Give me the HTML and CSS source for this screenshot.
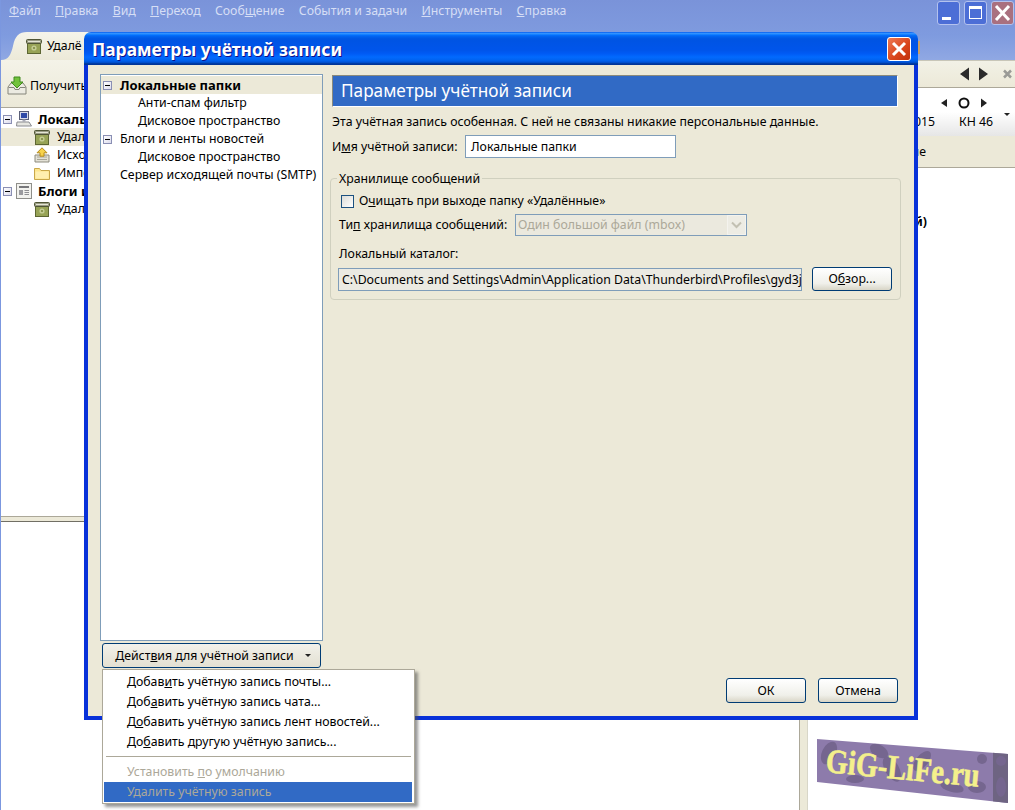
FILE: index.html
```html
<!DOCTYPE html>
<html lang="ru">
<head>
<meta charset="utf-8">
<title>Параметры учётной записи</title>
<link rel="stylesheet" href="styles.css">
</head>
<body>
<svg class="defs" width="0" height="0" aria-hidden="true">
  <symbol id="i-trash" viewBox="0 0 16 16">
    <rect x="1.500" y="5" width="13" height="10.500" fill="#97a356" stroke="#5d6632"/>
    <rect x="0.500" y="1.500" width="15" height="4" rx="1" fill="#9a9c84" stroke="#4f5535"/>
    <rect x="2" y="3" width="12" height="1" fill="#e4e5d5"/>
    <circle cx="8" cy="10" r="2.600" fill="#c4cc94"/>
    <circle cx="8" cy="10" r="1.100" fill="#7e8a42"/>
  </symbol>
  <symbol id="i-out" viewBox="0 0 16 16">
    <path d="M1 8h14v7H1z" fill="#e3e1d6" stroke="#8d8b7f"/>
    <path d="M3 10h10M3 12.500h10" stroke="#a8a697"/>
    <path d="M8 .8l5 5h-3v3.400H6V5.800H3z" fill="#f7d34b" stroke="#b48a1e"/>
  </symbol>
  <symbol id="i-folder" viewBox="0 0 16 16">
    <path d="M.5 3.500h5l1.500 2h8.500v9H.5z" fill="#fde58c" stroke="#c9a74a"/>
    <path d="M1.500 6.500h13v7h-13z" fill="#ffefb0"/>
  </symbol>
  <symbol id="i-pc" viewBox="0 0 16 16">
    <rect x="3.500" y=".5" width="9" height="8" fill="#d9dcea" stroke="#5b6078"/>
    <rect x="5" y="2" width="6" height="5" fill="#2f4aa8"/>
    <rect x="6.500" y="8.500" width="3" height="2" fill="#a9abb8"/>
    <path d="M1 11h12l2.500 4H.5z" fill="#e6e6e0" stroke="#8a8b90"/>
  </symbol>
  <symbol id="i-feed" viewBox="0 0 16 16">
    <rect x=".5" y=".5" width="15" height="15" fill="#f2f2ee" stroke="#8f8f8a"/>
    <rect x="3" y="3" width="10" height="2" fill="#77777a"/>
    <rect x="3" y="7" width="4" height="5" fill="#9a9a9e"/>
    <path d="M8.500 7.500h4.500M8.500 9.500h4.500M8.500 11.500h4.500" stroke="#8f8f92"/>
  </symbol>
  <symbol id="i-get" viewBox="0 0 20 20">
    <path d="M1 11l3-4h12l3 4v7H1z" fill="#ecebe2" stroke="#85857a"/>
    <path d="M1.500 11.500h5.500l1 2h4l1-2h5.500" fill="none" stroke="#85857a"/>
    <path d="M7 1h6v5h3l-6 6-6-6h3z" fill="#72c23c" stroke="#3f8a1e"/>
  </symbol>
</svg>

<div class="app">
  <header class="chrome">
    <div class="menu-row">
      <nav class="menu">
        <span><u>Ф</u>айл</span>
        <span><u>П</u>равка</span>
        <span><u>В</u>ид</span>
        <span><u>П</u>ереход</span>
        <span>Сооб<u>щ</u>ение</span>
        <span>События и задачи</span>
        <span><u>И</u>нструменты</span>
        <span><u>С</u>правка</span>
      </nav>
      <div class="win-btns">
        <div class="win-btn"><svg width="23" height="24" viewBox="0 0 23 24"><rect x="5" y="16" width="9" height="3" fill="#fff"/></svg></div>
        <div class="win-btn"><svg width="23" height="24" viewBox="0 0 23 24"><rect x="5.500" y="5.500" width="12" height="12" fill="none" stroke="#fff"/><rect x="5" y="5" width="13" height="3" fill="#fff"/></svg></div>
        <div class="win-btn win-close"><svg width="23" height="24" viewBox="0 0 23 24"><path d="M5 5l13 14M18 5L5 19" stroke="#fff" stroke-width="3"/></svg></div>
      </div>
    </div>
    <div class="tab-row">
      <div class="tab"><svg class="ico16"><use href="#i-trash"/></svg><span>Удалё</span></div>
      <div class="tab-end"></div>
    </div>
  </header>

  <div class="work">
    <div class="main-col">
      <div class="toolbar"><svg class="ico20"><use href="#i-get"/></svg><span>Получить</span></div>
      <div class="folders">
        <div class="f-row"><i class="exp"></i><svg class="ico16"><use href="#i-pc"/></svg><b>Локальные папки</b></div>
        <div class="f-row sub cur"><svg class="ico16"><use href="#i-trash"/></svg><span>Удалённые</span></div>
        <div class="f-row sub"><svg class="ico16"><use href="#i-out"/></svg><span>Исходящие</span></div>
        <div class="f-row sub"><svg class="ico16"><use href="#i-folder"/></svg><span>Импорт</span></div>
        <div class="f-row"><i class="exp"></i><svg class="ico16"><use href="#i-feed"/></svg><b>Блоги и ленты</b></div>
        <div class="f-row sub"><svg class="ico16"><use href="#i-trash"/></svg><span>Удалённые</span></div>
      </div>
      <div class="hsplit"></div>
      <div class="preview"></div>
    </div>
    <div class="vsplit"></div>
    <aside class="today">
      <div class="today-bar">
        <svg width="58" height="14" viewBox="0 0 58 14"><path d="M5 7l9-6.500v13zM24 .5l9 6.500-9 6.500z" fill="#2b2b2b"/><path d="M49 3.500l7 7M56 3.500l-7 7" stroke="#9a9a96" stroke-width="2.500"/></svg>
      </div>
      <div class="cal">
        <div class="cal-nav">
          <svg width="46" height="14" viewBox="0 0 46 14"><path d="M6 3v8L0 7z" fill="#222"/><circle cx="23" cy="7" r="4.500" fill="none" stroke="#111" stroke-width="2"/><path d="M40 2.500v9l6-4.500z" fill="#222"/></svg>
          <i class="cal-down"></i>
        </div>
        <div class="cal-date"><span class="cal-year">ноября 2015</span><span>КН 46</span></div>
      </div>
      <div class="today-sub"><span>Новое событие</span></div>
      <div class="today-list"><b>Завтрашний)</b></div>
    </aside>
  </div>
</div>

<div class="dialog">
  <div class="d-title">
    <span>Параметры учётной записи</span>
    <div class="d-close"><svg width="22" height="22" viewBox="0 0 22 22"><path d="M5 5l12 12M17 5L5 17" stroke="#fff" stroke-width="3"/></svg></div>
  </div>
  <div class="d-body">
    <div class="d-left">
      <div class="tree">
        <div class="t-row cur"><i class="exp"></i><b>Локальные папки</b></div>
        <div class="t-row lvl2">Анти-спам фильтр</div>
        <div class="t-row lvl2">Дисковое пространство</div>
        <div class="t-row"><i class="exp"></i><span>Блоги и ленты новостей</span></div>
        <div class="t-row lvl2">Дисковое пространство</div>
        <div class="t-row lvl1">Сервер исходящей почты (SMTP)</div>
      </div>
      <div class="actions">
        <div class="btn act-btn"><span>Дейст<u>в</u>ия для учётной записи</span><i class="caret"></i></div>
        <div class="popup">
          <div class="p-item">Добав<u>и</u>ть учётную запись почты...</div>
          <div class="p-item">Доб<u>а</u>вить учётную запись чата...</div>
          <div class="p-item">Д<u>о</u>бавить учётную запись лент новостей...</div>
          <div class="p-item">До<u>б</u>авить другую учётную запись...</div>
          <div class="p-sep"></div>
          <div class="p-item off">Установить <u>п</u>о умолчанию</div>
          <div class="p-item off hot">У<u>д</u>алить учётную запись</div>
        </div>
      </div>
    </div>
    <div class="d-right">
      <div class="banner">Параметры учётной записи</div>
      <div class="note">Эта учётная запись особенная. С ней не связаны никакие персональные данные.</div>
      <div class="name-row">
        <label class="name-label">И<u>м</u>я учётной записи:</label>
        <div class="field name-field">Локальные папки</div>
      </div>
      <fieldset class="store">
        <legend>Хранилище сообщений</legend>
        <div class="check-row"><i class="check"></i><span>О<u>ч</u>ищать при выходе папку «Удалённые»</span></div>
        <div class="sel-row">
          <label>Ти<u>п</u> хранилища сообщений:</label>
          <div class="field select"><span>Один большой файл (mbox)</span>
            <i class="sel-arrow"><svg width="11" height="8" viewBox="0 0 11 8"><path d="M1 1.500l4.500 4.500L10 1.500" fill="none" stroke="#c2c0b2" stroke-width="2"/></svg></i>
          </div>
        </div>
        <div class="dir-label">Локальный каталог:</div>
        <div class="dir-row">
          <div class="field dir-field"><span>C:\Documents and Settings\Admin\Application Data\Thunderbird\Profiles\gyd3j2</span></div>
          <div class="btn browse">О<u>б</u>зор...</div>
        </div>
      </fieldset>
      <div class="d-foot">
        <div class="btn foot-btn">ОК</div>
        <div class="btn foot-btn">Отмена</div>
      </div>
    </div>
  </div>
</div>

<svg class="logo" width="191" height="64" viewBox="0 0 191 64">
  <defs><clipPath id="logo-clip"><path d="M0 0L191 15V64L0 43z"/></clipPath></defs>
  <g clip-path="url(#logo-clip)">
    <rect width="191" height="64" fill="#8d7bab"/>
    <rect x="176" width="15" height="64" fill="#6e6482"/>
    <g fill="#75668f">
      <ellipse cx="12" cy="14" rx="7" ry="12" transform="rotate(25 12 14)"/>
      <ellipse cx="62" cy="12" rx="10" ry="6" transform="rotate(30 62 12)"/>
      <ellipse cx="75" cy="30" rx="7" ry="14" transform="rotate(-30 75 30)"/>
      <ellipse cx="105" cy="22" rx="6" ry="12" transform="rotate(40 105 22)"/>
      <ellipse cx="135" cy="48" rx="12" ry="5" transform="rotate(15 135 48)"/>
      <circle cx="165" cy="20" r="5"/>
      <circle cx="184" cy="22" r="5"/>
      <ellipse cx="184" cy="48" rx="5" ry="10"/>
      <ellipse cx="160" cy="48" rx="9" ry="6"/>
      <ellipse cx="38" cy="40" rx="9" ry="4"/>
    </g>
    <text class="logo-text" transform="translate(8 33) rotate(5.500) scale(1 1.200)">GiG-LiFe.ru</text>
  </g>
</svg>
</body>
</html>
```

FILE: styles.css
```css
* { box-sizing: border-box; }
html, body { margin: 0; height: 100%; }
body {
  position: relative;
  width: 1015px;
  height: 810px;
  overflow: hidden;
  font: 12.300px/16px "Noto Sans", sans-serif;
  color: #000;
  background: #fff;
}
u { text-underline-offset: 1px; }
b { font-size: 13px; }
i { display: block; font-style: normal; }
.defs { position: absolute; }
.ico16 { width: 16px; height: 16px; flex: none; }
.ico20 { width: 20px; height: 20px; flex: none; }

/* background application window */
.app {
  display: flex;
  flex-direction: column;
  height: 810px;
  border-left: 1px solid #7b97df;
}
.chrome { height: 60px; background: linear-gradient(180deg, #7a93d9 0%, #7f9bdf 60%, #90a8e3 100%); }
.menu-row { display: flex; justify-content: space-between; height: 26px; }
.menu { display: flex; gap: 14.300px; padding: 3px 0 0 8px; color: #d6def5; }
.win-btns { display: flex; gap: 4px; padding: 1px 1px 0 0; }
.win-btn { width: 23px; height: 24px; border: 1px solid #b4c2ee; border-radius: 3px; background: #4c6ed6; display: flex; }
.win-btn svg { margin: -1px; flex: none; }
.win-close { background: #a9707f; }
.tab-row { display: flex; justify-content: space-between; height: 34px; padding: 6px 95px 0 0; }
.tab {
  width: 105px;
  height: 28px;
  display: flex;
  align-items: center;
  gap: 5px;
  padding-left: 25px;
  background: linear-gradient(180deg, #f5f4ea, #ece9d8);
  clip-path: path("M0 28C8 28 10 22 12 14C14 4 18 0 26 0H105V28Z");
  white-space: nowrap;
  overflow: hidden;
}
.tab-end { width: 60px; height: 13px; margin-top: 9px; background: #c9a06a; }

.work { flex: 1; display: flex; min-height: 0; }
.main-col { width: 798px; display: flex; flex-direction: column; }
.toolbar { height: 48px; display: flex; align-items: center; gap: 3px; padding: 5px 0 0 6px; background: linear-gradient(180deg, #f4f3e8, #ece9d8); border-bottom: 1px solid #aca899; }
.folders { height: 408px; background: #fff; padding-top: 2px; }
.f-row { height: 18px; display: flex; align-items: center; gap: 4px; padding-left: 2px; white-space: nowrap; }
.f-row svg { margin-right: 2px; }
.f-row.sub { padding-left: 33px; gap: 5px; }
.f-row.cur { background: #ece9d8; }
.exp { width: 9px; height: 9px; border: 1px solid #8a8fb4; background: linear-gradient(135deg, #fff, #dcdcec); position: relative; flex: none; }
.exp::after { content: ""; position: absolute; left: 1px; right: 1px; top: 3px; height: 1px; background: #000; }
.hsplit { height: 6px; background: #ece9d8; border-top: 1px solid #aca899; border-bottom: 1px solid #716f64; }
.preview { flex: 1; background: #fff; }
.vsplit { width: 9px; background: #ece9d8; border-left: 1px solid #aca899; border-right: 1px solid #d8d6c8; }
.today { flex: 1; display: flex; flex-direction: column; }
.today-bar { height: 27px; display: flex; align-items: center; justify-content: flex-end; padding-right: 2px; background: linear-gradient(180deg, #f2f1e6, #ece9d8); border-top: 1px solid #c8c6b8; }
.cal { height: 49px; background: linear-gradient(180deg, #fff 50%, #e6e6e6 100%); position: relative; border-top: 1px solid #aca899; }
.cal-nav { display: flex; height: 26px; padding: 8px 0 0 133px; }
.cal-down { position: absolute; right: 5px; top: 25px; border: 3px solid transparent; border-top-color: #222; border-bottom: 0; }
.cal-date { display: flex; height: 20px; }
.cal-year { width: 127px; text-align: right; white-space: nowrap; overflow: hidden; margin-right: 24px; }
.today-sub { height: 32px; display: flex; align-items: center; background: #ece9d8; border-bottom: 1px solid #aca899; }
.today-sub span { width: 118px; text-align: right; white-space: nowrap; overflow: hidden; }
.today-list { flex: 1; padding: 46px 0 0 0; white-space: nowrap; }
.today-list b { display: block; width: 119px; text-align: right; font-size: 12.300px; }

/* dialog window, floats over the application */
.dialog { position: absolute; left: 84px; top: 32px; width: 834px; height: 688px; display: flex; flex-direction: column; }
.d-title {
  height: 33px;
  display: flex;
  align-items: center;
  justify-content: space-between;
  padding: 1px 7px 0 8px;
  border-radius: 7px 7px 0 0;
  background: linear-gradient(180deg, #0058ee 0%, #3593ff 4%, #288eff 6%, #127dff 8%, #036ffc 10%, #0262ee 14%, #0057e5 20%, #0054e3 24%, #0055eb 56%, #005bf5 66%, #026afe 76%, #0062ef 86%, #0052d6 92%, #0040ab 94%, #003092 100%);
  color: #fff;
  font-size: 17.400px;
  font-weight: bold;
  text-shadow: 1px 1px #0f1089;
}
.d-close { width: 24px; height: 24px; border: 1px solid #fff; border-radius: 3px; background: linear-gradient(135deg, #ee7a55, #d8431a 60%, #c0320e); display: flex; align-items: center; justify-content: center; }
.d-body { flex: 1; min-height: 0; display: flex; gap: 9px; padding: 9px 16px 13px 12px; background: #ece9d8; border: 4px solid #0831d9; border-top: 0; }
.d-left { width: 223px; display: flex; flex-direction: column; gap: 2px; margin-bottom: 35px; }
.tree { flex: 1; background: #fff; border: 1px solid #7f9db9; padding-top: 1px; }
.t-row { height: 18px; line-height: 16px; display: flex; align-items: center; gap: 8px; padding-left: 2px; white-space: nowrap; }
.t-row.cur { background: #ece9d8; }
.lvl2 { padding-left: 37px; }
.lvl1 { padding-left: 19px; }
.actions { position: relative; margin-left: 2px; width: 219px; }
.btn { display: flex; align-items: center; justify-content: center; border: 1px solid #003c74; border-radius: 3px; background: linear-gradient(180deg, #fff, #f0f0ea 70%, #d8d5c6); white-space: nowrap; }
.act-btn { height: 25px; gap: 11px; padding-left: 3px; background: linear-gradient(180deg, #f2f1ea, #e3e0d2); }
.caret { border: 3px solid transparent; border-top-color: #222; border-bottom: 0; }
.popup { position: absolute; left: 0; top: 26px; width: 313px; height: 135px; padding-top: 2px; background: #fff; border: 1px solid #aca899; box-shadow: 3px 3px 3px rgba(80, 80, 80, .6); z-index: 5; }
.p-item { height: 20px; line-height: 20px; padding-left: 23px; white-space: nowrap; margin: 0 2px 0 1px; }
.p-sep { height: 1px; background: #aca899; margin: 4px 3px 5px; }
.p-item.off { color: #aca899; }
.p-item.hot { background: #316ac5; }

.d-right { flex: 1; min-width: 0; display: flex; flex-direction: column; padding-top: 1px; }
.banner { height: 32px; line-height: 29px; padding-left: 8px; background: #316ac5; color: #fff; font-size: 17.200px; border: 1px solid; border-color: #8a8a7c #fff #fff #8a8a7c; }
.note { margin-top: 7px; height: 16px; white-space: nowrap; }
.name-row { display: flex; align-items: center; margin-top: 5px; }
.name-label { width: 133px; white-space: nowrap; }
.field { border: 1px solid #7f9db9; background: #fff; white-space: nowrap; overflow: hidden; }
.name-field { width: 211px; height: 23px; line-height: 21px; padding-left: 5px; }
.store { margin: 10px -3px 0 -2px; padding: 0 8px 8px 7px; border: 1px solid #d0d0bf; border-radius: 4px; min-width: 0; }
.store legend { padding: 2px 2px 0; margin-left: -1px; line-height: 18px; }
.check-row { display: flex; align-items: center; gap: 5px; height: 16px; margin-left: 3px; margin-top: 5px; }
.check { width: 13px; height: 13px; border: 1px solid #1c5180; background: linear-gradient(135deg, #dcdcd7, #fff); flex: none; }
.sel-row { display: flex; align-items: center; margin-top: 5px; }
.sel-row label { width: 177px; padding-left: 1px; white-space: nowrap; }
.select { width: 232px; height: 22px; display: flex; align-items: center; justify-content: space-between; padding-left: 2px; color: #aca899; background: #ebe9de; }
.sel-arrow { width: 19px; height: 20px; display: flex; align-items: center; justify-content: center; background: #edece4; border: 1px solid #f4f3ee; }
.dir-label { margin-top: 10px; height: 16px; padding-left: 1px; }
.dir-row { display: flex; align-items: center; gap: 10px; margin-top: 5px; }
.dir-field { width: 465px; height: 23px; line-height: 21px; padding-left: 3px; background: #ebeae2; }
.browse { width: 80px; height: 24px; }
.d-foot { margin-top: auto; display: flex; justify-content: flex-end; gap: 12px; }
.foot-btn { width: 80px; height: 25px; }

/* site watermark over the corner of the screenshot */
.logo { position: absolute; left: 817px; top: 739px; }
.logo-text { font: bold 28.500px "Liberation Serif", serif; fill: #f4f08c; stroke: #f4f08c; stroke-width: .5px; }
```
